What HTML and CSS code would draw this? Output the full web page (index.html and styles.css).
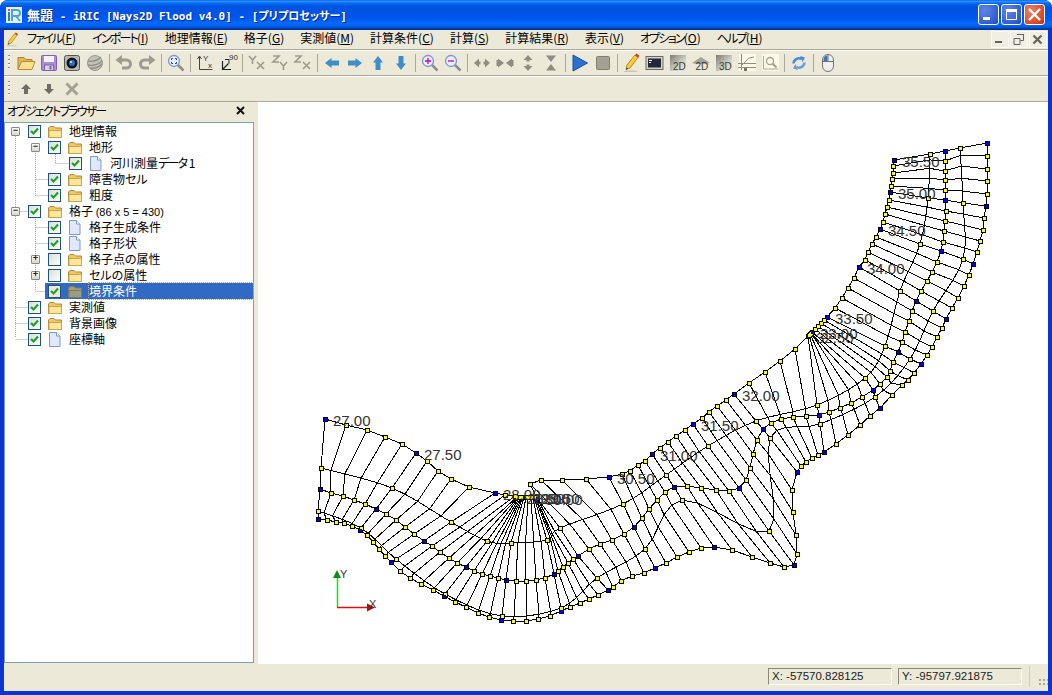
FILE: index.html
```html
<!DOCTYPE html>
<html lang="ja">
<head>
<meta charset="utf-8">
<title>iRIC</title>
<link rel="stylesheet" href="styles.css">
</head>
<body>
<svg class="defs" aria-hidden="true">
  <symbol id="folder" viewBox="0 0 16 15"><path d="M1.500 4 3 2.500h4l1.500 1.500h6v9.500h-13z" fill="#f3c65f" stroke="#a98a3c"/><path d="M2 6.500h12.500v7H2z" fill="#fde79c" stroke="#c9a44e"/></symbol>
  <symbol id="folderdim" viewBox="0 0 16 15"><path d="M1.500 4 3 2.500h4l1.500 1.500h6v9.500h-13z" fill="#a69f70" stroke="#7f7a58"/><path d="M2 6.500h12.500v7H2z" fill="#9c9c86" stroke="#7a7a6a"/></symbol>
  <symbol id="doc" viewBox="0 0 16 15"><path d="M2.500 .5h7l3.500 3.500v10.500H2.500z" fill="#dfe9fb" stroke="#7d98c9"/><path d="M9.500 .5v3.500H13" fill="#fff" stroke="#7d98c9"/></symbol>
  <symbol id="tick" viewBox="0 0 13 13"><path d="M3 6l2.500 2.500L10 3.500" fill="none" stroke="#21a121" stroke-width="2.200"/></symbol>
  <symbol id="i-pencil" viewBox="0 0 20 20"><path d="M2 19h14l-2 -1.500H3z" fill="#c9c6b8"/><path d="M5 12 13 2l3 2.500L8 15l-4 1.500z" fill="#f7c93c" stroke="#b98a1c"/><path d="M13 2l1.500-1.500 3 2.500L16 4.500z" fill="#d8342a"/><path d="M4 16.500l.7-2 1.500 1.200z" fill="#333"/></symbol>
  <symbol id="i-open" viewBox="0 0 20 20"><path d="M2 16V4.500h6l2 2h6V9" fill="#e4b653" stroke="#a9832f"/><path d="M5.500 8.500h13.500l-3 8H2z" fill="#fbe08f" stroke="#b38d33"/></symbol>
  <symbol id="i-save" viewBox="0 0 20 20"><rect x="2.500" y="2.500" width="15" height="15" rx="1" fill="#a78fd2" stroke="#7d63ad"/><rect x="5" y="3" width="10" height="6" fill="#f5f3fa"/><rect x="5.500" y="12" width="9" height="5.500" fill="#d9d2e8" stroke="#7d63ad"/><rect x="10.500" y="13" width="2" height="3.500" fill="#7d63ad"/></symbol>
  <symbol id="i-cam" viewBox="0 0 20 20"><rect x="2.500" y="2.500" width="15" height="15" rx="2" fill="#b8b8b8" stroke="#555"/><circle cx="10" cy="10" r="5.500" fill="#151515"/><circle cx="10" cy="10" r="3" fill="#2b70c4"/><circle cx="9" cy="9" r="1" fill="#d8ecff"/></symbol>
  <symbol id="i-sphere" viewBox="0 0 20 20"><circle cx="10" cy="10" r="7.500" fill="#c4c1b6" stroke="#9a988e"/><path d="M3 8c5 1 10-1 13-4M3 12c6 1 11-1 14-4M5 15c5 1 9-1 12-4" fill="none" stroke="#918f86" stroke-width="1.300"/></symbol>
  <symbol id="i-undo" viewBox="0 0 20 20"><path d="M6 7h6.500a4 4 0 0 1 0 8H8" fill="none" stroke="#9d9b90" stroke-width="3"/><path d="M8 2v10L1.500 7z" fill="#9d9b90"/></symbol>
  <symbol id="i-redo" viewBox="0 0 20 20"><path d="M14 7H7.500a4 4 0 0 0 0 8H12" fill="none" stroke="#9d9b90" stroke-width="3"/><path d="M12 2v10l6.500-5z" fill="#9d9b90"/></symbol>
  <symbol id="i-fit" viewBox="0 0 20 20"><path d="M11.500 11.500l6 6" stroke="#8d8d8d" stroke-width="2.500"/><circle cx="8" cy="8" r="5.500" fill="#e6effc" stroke="#7c95d8" stroke-width="1.300"/><path d="M5.500 7V5.500H7M9 5.500h1.500V7M10.500 9v1.500H9M7 10.500H5.500V9" fill="none" stroke="#2a3fc0"/></symbol>
  <symbol id="i-zin" viewBox="0 0 20 20"><path d="M11.500 11.500l6 6" stroke="#8d8d8d" stroke-width="2.500"/><circle cx="8" cy="8" r="5.500" fill="#e6effc" stroke="#7c95d8" stroke-width="1.300"/><path d="M5 8h6M8 5v6" stroke="#c400c4" stroke-width="1.300"/></symbol>
  <symbol id="i-zout" viewBox="0 0 20 20"><path d="M11.500 11.500l6 6" stroke="#8d8d8d" stroke-width="2.500"/><circle cx="8" cy="8" r="5.500" fill="#e6effc" stroke="#7c95d8" stroke-width="1.300"/><path d="M5 8h6" stroke="#c400c4" stroke-width="1.300"/></symbol>
  <symbol id="i-yx" viewBox="0 0 20 20"><path d="M2 3l3.500 4 3.500-4M5.500 7v4M10 9l7 7M17 9l-7 7" fill="none" stroke="#9d9b90" stroke-width="1.600"/></symbol>
  <symbol id="i-zy" viewBox="0 0 20 20"><path d="M3 3h6L3 9h6M10 9l3.500 4 3.500-4M13.500 13v4" fill="none" stroke="#9d9b90" stroke-width="1.600"/></symbol>
  <symbol id="i-zx" viewBox="0 0 20 20"><path d="M2 3h6L2 9h6M10 9l7 7M17 9l-7 7" fill="none" stroke="#9d9b90" stroke-width="1.600"/></symbol>
  <symbol id="i-left" viewBox="0 0 20 20"><path d="M3 10l6.500-5v2.500h7.500v5H9.500V15z" fill="#3e8fc6"/></symbol>
  <symbol id="i-right" viewBox="0 0 20 20"><path d="M17 10l-6.500-5v2.500H3v5h7.500V15z" fill="#3e8fc6"/></symbol>
  <symbol id="i-up" viewBox="0 0 20 20"><path d="M10 3 5 9.500h2.500V17h5V9.500H15z" fill="#3e8fc6"/></symbol>
  <symbol id="i-down" viewBox="0 0 20 20"><path d="M10 17 5 10.500h2.500V3h5v7.500H15z" fill="#3e8fc6"/></symbol>
  <symbol id="i-ex" viewBox="0 0 20 20"><path d="M2 10l5-4.500v3h1.500v3H7v3zM18 10l-5-4.500v3h-1.500v3H13v3z" fill="#8f8d82"/></symbol>
  <symbol id="i-sh" viewBox="0 0 20 20"><path d="M1.500 7v6h1.500v1.500L9 10 3 5.500V7zM18.500 7v6H17v1.500L11 10l6-4.500V7z" fill="#8f8d82"/></symbol>
  <symbol id="i-ey" viewBox="0 0 20 20"><path d="M10 2l-4.500 5h3v1.500h3V7h3zM10 18l-4.500-5h3v-1.500h3V13h3z" fill="#8f8d82"/></symbol>
  <symbol id="i-sv" viewBox="0 0 20 20"><path d="M5 2.500h10L10 9zM5 17.500h10L10 11z" fill="#8f8d82"/></symbol>
  <symbol id="i-play" viewBox="0 0 20 20"><path d="M3 2l14.500 8L3 18z" fill="#2b6fd2" stroke="#1d4fa3"/></symbol>
  <symbol id="i-stop" viewBox="0 0 20 20"><rect x="3.500" y="3.500" width="13" height="13" rx="1" fill="#a3a094" stroke="#827f73"/></symbol>
  <symbol id="i-con" viewBox="0 0 20 20"><rect x="1" y="3.500" width="17" height="13" fill="#d4d2c8" stroke="#6e6c62"/><rect x="3" y="5.500" width="13" height="9" fill="#20273a"/><path d="M4 7.500h3M4 9.500h2" stroke="#fff"/></symbol>
  <symbol id="i-chart" viewBox="0 0 20 20"><rect x="2" y="1" width="17" height="17" fill="#fbfae8"/><path d="M4.500 1v16M1 14.500h18M1 10.500h18" stroke="#8f8d82" fill="none"/><path d="M4 13 12 5l5-1" fill="none" stroke="#99977f"/><rect x="7" y="15" width="3" height="3" fill="#75736a"/></symbol>
  <symbol id="i-zdoc" viewBox="0 0 20 20"><rect x="2" y="1" width="17" height="17" fill="#fbfae8"/><path d="M3.500 3v13h15" fill="none" stroke="#a9a798"/><circle cx="10" cy="8" r="3.500" fill="none" stroke="#a3a194" stroke-width="1.300"/><path d="M12.500 10.500l4 4" stroke="#a3a194" stroke-width="2"/></symbol>
  <symbol id="i-ref" viewBox="0 0 20 20"><path d="M4.500 10.500a5.500 5.500 0 0 1 8-4.500" fill="none" stroke="#4f86d8" stroke-width="2.500"/><path d="M11 3l5 1.500-2.500 4.500z" fill="#4f86d8"/><path d="M15.500 9.500a5.500 5.500 0 0 1-8 4.500" fill="none" stroke="#6a9ae0" stroke-width="2.500"/><path d="M9 17l-5-1.500L6.500 11z" fill="#6a9ae0"/></symbol>
  <symbol id="i-mouse" viewBox="0 0 20 20"><rect x="4.500" y="1.500" width="11" height="17" rx="5.500" fill="#efefef" stroke="#77756c"/><path d="M10 1.500v7M4.500 8.500h11" stroke="#77756c" fill="none"/><path d="M9.500 2.500v5.500H5.500V6a4 4 0 0 1 4-3.500z" fill="#3e73cc"/></symbol>
  <symbol id="i-up2" viewBox="0 0 20 20"><path d="M10 5 5 10h3v5h4v-5h3z" fill="#6f6d63"/></symbol>
  <symbol id="i-down2" viewBox="0 0 20 20"><path d="M10 15l-5-5h3V5h4v5h3z" fill="#6f6d63"/></symbol>
  <symbol id="i-x2" viewBox="0 0 20 20"><path d="M4.500 4.500l11 11M15.500 4.500l-11 11" stroke="#a3a194" stroke-width="3"/></symbol>
  <linearGradient id="gr" x1="0" y1="0" x2="1" y2="1"><stop offset="0" stop-color="#7e7c72"/><stop offset=".6" stop-color="#d2d0c4"/><stop offset="1" stop-color="#efeee4"/></linearGradient>
</svg>

<div class="window">
  <header class="titlebar">
    <svg class="appicon" viewBox="0 0 16 16"><rect width="16" height="16" fill="#e9f1f8"/><rect x="2" y="2" width="2" height="2" fill="#e24b3a"/><rect x="2" y="5" width="2" height="9" fill="#2a7fc0"/><path d="M6 14V3h5a3 3 0 0 1 0 6H6M10 9l4 5" fill="none" stroke="#4aa6d6" stroke-width="2"/></svg>
    <div class="title"><span class="tj">無題</span> - iRIC [Nays2D Flood v4.0] - [<span class="tk">プリプロセッサー</span>]</div>
    <div class="capbtns">
      <div class="cap"><svg viewBox="0 0 19 19" class="capic"><rect x="4" y="12" width="7" height="3" fill="#fff"/></svg></div>
      <div class="cap"><svg viewBox="0 0 19 19" class="capic"><path d="M4.500 4.500h10v10h-10z" fill="none" stroke="#fff"/><rect x="4" y="4" width="11" height="3" fill="#fff"/></svg></div>
      <div class="cap close"><svg viewBox="0 0 19 19" class="capic"><path d="M4 4l11 11M15 4 4 15" stroke="#fff" stroke-width="2.400"/></svg></div>
    </div>
  </header>

  <nav class="menubar">
    <svg class="menupencil"><use href="#i-pencil"/></svg>
    <div class="menus">
      <span class="mi"><span class="kn">ファイル</span>(<u>F</u>)</span>
      <span class="mi"><span class="kn">インポート</span>(<u>I</u>)</span>
      <span class="mi">地理情報(<u>E</u>)</span>
      <span class="mi">格子(<u>G</u>)</span>
      <span class="mi">実測値(<u>M</u>)</span>
      <span class="mi">計算条件(<u>C</u>)</span>
      <span class="mi">計算(<u>S</u>)</span>
      <span class="mi">計算結果(<u>R</u>)</span>
      <span class="mi">表示(<u>V</u>)</span>
      <span class="mi"><span class="kn">オプション</span>(<u>O</u>)</span>
      <span class="mi"><span class="kn">ヘルプ</span>(<u>H</u>)</span>
    </div>
    <div class="mdibtns">
      <div class="mdi"><svg viewBox="0 0 15 15" class="mdic"><rect x="3" y="9" width="7" height="2" fill="#66645a"/></svg></div>
      <div class="mdi"><svg viewBox="0 0 15 15" class="mdic"><path d="M6.500 2.500h6v6h-3M3 6.500h6v6H3z" fill="none" stroke="#66645a"/><path d="M6 2.500h7M3 6.500h6" stroke="#66645a"/></svg></div>
      <div class="mdi"><svg viewBox="0 0 15 15" class="mdic"><path d="M3.500 3.500l8 8M11.500 3.500l-8 8" stroke="#66645a" stroke-width="2.200"/></svg></div>
    </div>
  </nav>

  <div class="toolbar">
    <i class="grip"></i>
    <div class="tb"><svg class="ic"><use href="#i-open"/></svg></div>
    <div class="tb"><svg class="ic"><use href="#i-save"/></svg></div>
    <div class="tb"><svg class="ic"><use href="#i-cam"/></svg></div>
    <div class="tb"><svg class="ic"><use href="#i-sphere"/></svg></div>
    <i class="sep"></i>
    <div class="tb"><svg class="ic"><use href="#i-undo"/></svg></div>
    <div class="tb"><svg class="ic"><use href="#i-redo"/></svg></div>
    <i class="sep"></i>
    <div class="tb"><svg class="ic"><use href="#i-fit"/></svg></div>
    <i class="sep"></i>
    <div class="tb"><svg class="ic" viewBox="0 0 20 20"><path d="M4.500 4v12.500h13" fill="none" stroke="#444"/><path d="M2.500 6l2-3 2 3" fill="none" stroke="#444"/><text x="8" y="8" class="ict">Y</text><text x="13" y="15" class="ict">x</text></svg></div>
    <div class="tb"><svg class="ic" viewBox="0 0 20 20"><path d="M4.500 8v8.500H13M4.500 16.500l6-6" fill="none" stroke="#222" stroke-width="1.200"/><path d="M7 6.500h4v4" fill="none" stroke="#222"/><text x="11" y="7" class="ict">90</text></svg></div>
    <i class="sep"></i>
    <div class="tb"><svg class="ic"><use href="#i-yx"/></svg></div>
    <div class="tb"><svg class="ic"><use href="#i-zy"/></svg></div>
    <div class="tb"><svg class="ic"><use href="#i-zx"/></svg></div>
    <i class="sep"></i>
    <div class="tb"><svg class="ic"><use href="#i-left"/></svg></div>
    <div class="tb"><svg class="ic"><use href="#i-right"/></svg></div>
    <div class="tb"><svg class="ic"><use href="#i-up"/></svg></div>
    <div class="tb"><svg class="ic"><use href="#i-down"/></svg></div>
    <i class="sep"></i>
    <div class="tb"><svg class="ic"><use href="#i-zin"/></svg></div>
    <div class="tb"><svg class="ic"><use href="#i-zout"/></svg></div>
    <i class="sep"></i>
    <div class="tb"><svg class="ic"><use href="#i-ex"/></svg></div>
    <div class="tb"><svg class="ic"><use href="#i-sh"/></svg></div>
    <div class="tb"><svg class="ic"><use href="#i-ey"/></svg></div>
    <div class="tb"><svg class="ic"><use href="#i-sv"/></svg></div>
    <i class="sep"></i>
    <div class="tb"><svg class="ic"><use href="#i-play"/></svg></div>
    <div class="tb"><svg class="ic"><use href="#i-stop"/></svg></div>
    <i class="sep"></i>
    <div class="tb"><svg class="ic"><use href="#i-pencil"/></svg></div>
    <div class="tb"><svg class="ic"><use href="#i-con"/></svg></div>
    <div class="tb"><svg class="ic" viewBox="0 0 20 20"><rect x="2" y="2" width="16" height="16" fill="url(#gr)"/><text x="5" y="17" class="icd">2D</text></svg></div>
    <div class="tb"><svg class="ic" viewBox="0 0 20 20"><path d="M1 10l9-6 9 6-4 1H5z" fill="#a5a396"/><text x="4.500" y="17" class="icd">2D</text></svg></div>
    <div class="tb"><svg class="ic" viewBox="0 0 20 20"><rect x="2" y="2" width="16" height="16" fill="url(#gr)"/><text x="5" y="17" class="icd">3D</text></svg></div>
    <div class="tb"><svg class="ic"><use href="#i-chart"/></svg></div>
    <div class="tb"><svg class="ic"><use href="#i-zdoc"/></svg></div>
    <i class="sep"></i>
    <div class="tb"><svg class="ic"><use href="#i-ref"/></svg></div>
    <i class="sep"></i>
    <div class="tb"><svg class="ic"><use href="#i-mouse"/></svg></div>
  </div>

  <div class="toolbar">
    <i class="grip"></i>
    <div class="tb"><svg class="ic"><use href="#i-up2"/></svg></div>
    <div class="tb"><svg class="ic"><use href="#i-down2"/></svg></div>
    <div class="tb"><svg class="ic"><use href="#i-x2"/></svg></div>
  </div>

  <main class="workspace">
    <aside class="panel">
      <div class="panelhead"><span class="kn">オブジェクトブラウザー</span><svg class="panelx" viewBox="0 0 9 9"><path d="M1 1l7 7M8 1 1 8" stroke="#111" stroke-width="2"/></svg></div>
      <div class="tree">
        <svg class="guides" aria-hidden="true">
          <path d="M10.500 13v202M10.500 88.500h13M10.500 184.500h13M10.500 200.500h13M10.500 216.500h13M30.500 28v45M30.500 56.500h13M30.500 72.500h13M50.500 31v9M50.500 40.500h13M30.500 92v76M30.500 104.500h13M30.500 120.500h13M30.500 168.500h13" fill="none" stroke="#a6a598" stroke-dasharray="1 1"/>
        </svg>
        <div class="row d0"><span class="exp">−</span><div class="body"><span class="ck"><svg class="tick"><use href="#tick"/></svg></span><svg class="ti"><use href="#folder"/></svg><span class="lb">地理情報</span></div></div>
        <div class="row d1"><span class="exp">−</span><div class="body"><span class="ck"><svg class="tick"><use href="#tick"/></svg></span><svg class="ti"><use href="#folder"/></svg><span class="lb">地形</span></div></div>
        <div class="row d2"><span class="noexp"></span><div class="body"><span class="ck"><svg class="tick"><use href="#tick"/></svg></span><svg class="ti"><use href="#doc"/></svg><span class="lb">河川測量<span class="kn">データ</span> 1</span></div></div>
        <div class="row d1"><span class="noexp"></span><div class="body"><span class="ck"><svg class="tick"><use href="#tick"/></svg></span><svg class="ti"><use href="#folder"/></svg><span class="lb">障害物セル</span></div></div>
        <div class="row d1"><span class="noexp"></span><div class="body"><span class="ck"><svg class="tick"><use href="#tick"/></svg></span><svg class="ti"><use href="#folder"/></svg><span class="lb">粗度</span></div></div>
        <div class="row d0"><span class="exp">−</span><div class="body"><span class="ck"><svg class="tick"><use href="#tick"/></svg></span><svg class="ti"><use href="#folder"/></svg><span class="lb">格子 <small>(86 x 5 = 430)</small></span></div></div>
        <div class="row d1"><span class="noexp"></span><div class="body"><span class="ck"><svg class="tick"><use href="#tick"/></svg></span><svg class="ti"><use href="#doc"/></svg><span class="lb">格子生成条件</span></div></div>
        <div class="row d1"><span class="noexp"></span><div class="body"><span class="ck"><svg class="tick"><use href="#tick"/></svg></span><svg class="ti"><use href="#doc"/></svg><span class="lb">格子形状</span></div></div>
        <div class="row d1"><span class="exp">+</span><div class="body"><span class="ck"></span><svg class="ti"><use href="#folder"/></svg><span class="lb">格子点の属性</span></div></div>
        <div class="row d1"><span class="exp">+</span><div class="body"><span class="ck"></span><svg class="ti"><use href="#folder"/></svg><span class="lb">セルの属性</span></div></div>
        <div class="row d1 sel"><span class="noexp"></span><div class="body"><span class="ck"><svg class="tick"><use href="#tick"/></svg></span><svg class="ti"><use href="#folderdim"/></svg><span class="lb">境界条件</span></div></div>
        <div class="row d0"><span class="noexp"></span><div class="body"><span class="ck"><svg class="tick"><use href="#tick"/></svg></span><svg class="ti"><use href="#folder"/></svg><span class="lb">実測値</span></div></div>
        <div class="row d0"><span class="noexp"></span><div class="body"><span class="ck"><svg class="tick"><use href="#tick"/></svg></span><svg class="ti"><use href="#folder"/></svg><span class="lb">背景画像</span></div></div>
        <div class="row d0"><span class="noexp"></span><div class="body"><span class="ck"><svg class="tick"><use href="#tick"/></svg></span><svg class="ti"><use href="#doc"/></svg><span class="lb">座標軸</span></div></div>
      </div>
    </aside>
    <section class="canvas">
      <svg id="mesh" class="mesh" viewBox="258 102 790 562" xmlns="http://www.w3.org/2000/svg">
        <g id="grid"></g>
        <g id="axes">
          <path d="M337.500 607.500V575" stroke="#00f000" stroke-width="1.500" fill="none"/>
          <path d="M337 570l-4 8h8z" fill="#0a8f14"/>
          <path d="M337 607.500h33" stroke="#e01010" stroke-width="1.500" fill="none"/>
          <path d="M375 607.500l-8-4v8z" fill="#a80f14"/>
          <text x="340" y="578" class="axl">Y</text>
          <text x="369" y="608" class="axl">X</text>
        </g>
      </svg>
    </section>
  </main>

  <footer class="statusbar">
    <div class="field">X: -57570.828125</div>
    <div class="field">Y: -95797.921875</div>
    <div class="resize"></div>
  </footer>
</div>
<script src="mesh.js"></script>
</body>
</html>
```
FILE: styles.css
```css
* { box-sizing: border-box; }
html, body { margin: 0; padding: 0; background: #fff; overflow: hidden; }
body { width: 1052px; height: 695px; font-family: "Noto Sans CJK JP", sans-serif; font-size: 12px; color: #000; }
.defs { position: absolute; width: 0; height: 0; overflow: hidden; }
.ict { font: 8px "Liberation Sans", sans-serif; fill: #333; }
.icd { font: 10px "Liberation Sans", sans-serif; fill: #3a3a34; }
.kn { letter-spacing: -1.800px; }

.window { width: 1052px; height: 695px; display: flex; flex-direction: column; padding: 0 4px 4px; border-radius: 8px 8px 0 0; background: #0a35d0; }

.titlebar { flex: 0 0 30px; margin: 0 -4px; display: flex; align-items: center; padding: 0 7px 0 6px; border-radius: 8px 8px 0 0;
  background: linear-gradient(#0058ee 0%, #3593ff 4%, #288eff 6%, #127dff 8%, #036ffc 10%, #0262ee 14%, #0057e5 20%, #0054e1 24%, #0055eb 56%, #005bf5 66%, #026afe 76%, #0062ef 86%, #0052d6 92%, #0040ab 94%, #003092 100%); }
.appicon { width: 16px; height: 16px; margin-right: 5px; margin-top: -1px; flex: none; }
.title { flex: 1; color: #fff; font: bold 11px "DejaVu Sans Mono", monospace; text-shadow: 1px 1px 0 #0a2a90; white-space: pre; margin-top: -2px; }
.tj { font: bold 13px "Noto Sans CJK JP", sans-serif; }
.tk { font: bold 11px "Noto Sans CJK JP", sans-serif; font-feature-settings: "palt"; }
.capbtns { display: flex; gap: 2px; margin-top: -2px; }
.cap { width: 21px; height: 21px; border: 1px solid #fff; border-radius: 3px; background: radial-gradient(circle at 30% 30%, #5f86e8, #2c58d0 80%, #1f43b5); }
.cap.close { background: radial-gradient(circle at 30% 30%, #e9836a, #d9451f 75%, #b52e10); }
.capic { display: block; width: 19px; height: 19px; }

.menubar { flex: 0 0 20px; display: flex; align-items: center; background: #ece9d8; border-bottom: 1px solid #aca899; }
.menupencil { width: 15px; height: 15px; margin-left: 1px; flex: none; }
.menus { flex: 1; display: flex; padding-bottom: 3px; margin-left: -1px; }
.mi { padding: 0 8px; line-height: 16px; font-feature-settings: "palt"; white-space: nowrap; }
.mdibtns { display: flex; gap: 1px; padding-right: 1px; }
.mdi { width: 18px; height: 17px; background: #f1efe4; border: 1px solid #fbfaf5; }
.mdic { display: block; width: 15px; height: 15px; }

.toolbar { flex: 0 0 26px; display: flex; align-items: center; background: #ece9d8; border-top: 1px solid #fff; border-bottom: 1px solid #aca899; padding-left: 4px; }
.grip { flex: none; width: 2px; height: 16px; margin-right: 4px; background: repeating-linear-gradient(#8e8c80 0 1px, #fff 1px 2px, transparent 2px 4px); }
.tb { flex: none; width: 23px; height: 24px; display: flex; align-items: center; justify-content: center; }
.ic { display: block; width: 20px; height: 20px; }
.sep { flex: none; width: 6px; height: 18px; background: linear-gradient(#aca899, #aca899) center / 1px 100% no-repeat; }

.workspace { flex: 1; display: flex; min-height: 0; }
.panel { flex: 0 0 254px; display: flex; flex-direction: column; background: #ece9d8; padding-bottom: 1px; }
.panelhead { flex: 0 0 20px; display: flex; align-items: center; justify-content: space-between; padding: 0 9px 3px 3px; font-feature-settings: "palt"; margin-right: 4px; }
.panelx { width: 9px; height: 9px; }
.tree { position: relative; flex: 1; width: 250px; background: #fff; border: 1px solid #7f9db9; }
.guides { position: absolute; left: 0; top: 0; width: 100%; height: 100%; }
.row { position: relative; display: flex; align-items: center; height: 16px; }
.d0 { padding-left: 6px; }
.d1 { padding-left: 26px; }
.d2 { padding-left: 47px; }
.exp { flex: none; width: 9px; height: 9px; margin-right: 6px; border: 1px solid #7f8b9a; border-radius: 1px; background: linear-gradient(#fff, #d8d6c8); font: bold 9px/6px "Liberation Mono", monospace; text-align: center; color: #222; }
.noexp { flex: none; width: 15px; }
.body { flex: 1; display: flex; align-items: center; height: 16px; padding-left: 2px; min-width: 0; }
.ck { flex: none; width: 13px; height: 13px; border: 1px solid #1c5180; background: linear-gradient(135deg, #dcdcd7, #fff); position: relative; }
.tick { position: absolute; left: -1px; top: -1px; width: 13px; height: 13px; }
.ti { flex: none; width: 16px; height: 15px; margin-left: 6px; margin-right: 6px; }
.lb { white-space: nowrap; line-height: 15px; font-feature-settings: "palt"; margin-top: -1px; }
.lb small { font: 11px "Liberation Sans", sans-serif; }
.sel .body { margin-left: -1px; padding-left: 3px; background: #316ac5; }
.sel .ck { background: #ece9d8; }
.sel .lb { color: #fff; outline: 1px dotted #e8a040; flex: 1; margin-top: 0; height: 16px; }

.canvas { flex: 1; background: #fff; min-width: 0; }
.mesh { display: block; width: 790px; height: 562px; }
.mesh-line { fill: none; stroke: #000; stroke-width: 1; shape-rendering: crispEdges; }
.node { shape-rendering: crispEdges; }
.node.k { fill: #000; }
.node.y { fill: #ff0; }
.node.b { fill: #0000f0; }
.lab { font: 15px "Liberation Sans", sans-serif; fill: #333; }
.axl { font: 11px "Liberation Sans", sans-serif; fill: #333; }

.statusbar { flex: 0 0 27px; display: flex; align-items: center; justify-content: flex-end; gap: 6px; background: #ece9d8; padding-bottom: 3px; }
.field { width: 124px; height: 17px; border: 1px solid; border-color: #8a887c #fff #fff #8a887c; padding-left: 3px; font: 11.500px/15px "Liberation Sans", sans-serif; color: #222; }
.resize { width: 19px; height: 21px; margin-left: 1px; border-left: 1px solid #d0cdbc; background: radial-gradient(circle, #aca899 50%, transparent 55%) 0 0 / 4px 4px; background-clip: content-box; padding: 11px 0 0 8px; }
```
FILE: mesh.js
```js
// Computational grid of the river: 86 x 5 nodes; rows 0, 2 and 4 are listed,
// rows 1 and 3 are splined through their control points (one every 5 nodes).
var row0 = [[325,419],[346,425],[367,430],[385,437],[402,444],[416,453],[427,461],[438,471],[451,479],[469,487],
[495,493],[505,495],[515,496],[517,497],[518,497],[519,497],[520,497],[521,497],[522,497],[523,497],
[524,497],[526,497],[528,497],[531,497],[533,497],[534,497],[535,497],[536,497],[536,498],[537,498],
[537,498],[530,484],[541,480],[562,480],[586,479],[609,477],[622,474],[630,471],[638,465],[645,461],
[652,454],[660,448],[668,442],[676,436],[685,430],[693,424],[702,418],[709,412],[717,406],[726,400],
[734,394],[749,383],[765,372],[780,361],[795,349],[808,336],[809,335],[810,334],[811,333],[811,333],
[812,332],[815,329],[818,326],[821,323],[824,320],[827,317],[835,308],[842,298],[848,288],[854,278],
[859,267],[865,260],[868,252],[872,244],[876,237],[880,229],[883,222],[885,214],[887,207],[889,200],
[890,192],[891,186],[892,179],[893,173],[893,166],[894,160]];
var row2 = [[320,489],[331,493],[343,496],[354,500],[365,504],[376,509],[386,514],[396,520],[405,527],[414,534],
[424,541],[432,546],[440,552],[449,558],[457,563],[466,567],[474,571],[482,574],[490,576],[498,578],
[506,580],[516,581],[526,581],[536,580],[545,578],[554,574],[558,571],[563,567],[568,563],[573,559],
[578,556],[589,549],[600,544],[612,540],[624,534],[634,527],[642,518],[649,509],[657,500],[665,492],
[674,487],[687,486],[701,488],[716,490],[729,491],[739,488],[746,480],[750,468],[753,454],[757,440],
[763,429],[771,423],[781,419],[793,417],[806,416],[819,415],[829,412],[840,408],[851,403],[862,397],
[873,390],[880,384],[887,377],[890,371],[893,362],[898,352],[902,342],[905,332],[909,321],[912,311],
[916,301],[921,291],[927,281],[932,272],[937,262],[941,251],[943,242],[944,231],[945,221],[946,211],
[945,200],[945,190],[945,180],[945,171],[945,161],[945,151]];
var row4 = [[318,519],[327,520],[336,522],[344,523],[352,526],[360,530],[367,535],[373,542],[379,549],[385,556],
[391,562],[400,571],[410,578],[421,584],[433,590],[444,596],[455,602],[466,607],[478,613],[489,617],
[501,620],[513,621],[526,621],[538,619],[550,616],[561,611],[570,607],[580,603],[589,599],[598,595],
[608,590],[613,587],[621,581],[632,576],[644,573],[655,568],[666,563],[677,557],[689,552],[701,548],
[714,547],[732,550],[752,557],[770,563],[784,567],[794,565],[797,554],[796,535],[793,512],[792,490],
[797,472],[801,466],[806,462],[812,458],[818,455],[824,452],[836,444],[848,435],[860,425],[870,416],
[880,408],[892,395],[902,385],[908,380],[914,373],[921,364],[927,355],[932,347],[937,337],[942,328],
[946,319],[952,308],[958,298],[964,286],[969,275],[973,264],[977,252],[980,241],[983,230],[984,218],
[986,206],[987,194],[987,181],[987,169],[987,156],[987,143]];
var keys1 = [[321,468],[392,488],[451,522],[487,541],[511,543],[547,540],[560,528],[623,504],[666,475],
[708,446],[756,421],[817,405],[865,378],[885,346],[900,291],[920,244],[928,198],[930,154]];
var keys3 = [[318,511],[361,528],[396,559],[445,594],[502,616],[561,608],[597,578],[645,549],[682,500],
[769,531],[770,438],[820,424],[875,397],[910,359],[933,311],[963,259],[963,203],[960,148]];

function spline(keys) {
  var out = [];
  for (var i = 0; i <= 85; i++) {
    var s = Math.min(Math.floor(i / 5), keys.length - 2), t = i / 5 - s;
    var p0 = keys[Math.max(s - 1, 0)], p1 = keys[s], p2 = keys[s + 1], p3 = keys[Math.min(s + 2, keys.length - 1)];
    var pt = [0, 1].map(function (k) {
      return 0.5 * (2 * p1[k] + (p2[k] - p0[k]) * t + (2 * p0[k] - 5 * p1[k] + 4 * p2[k] - p3[k]) * t * t + (3 * p1[k] - p0[k] - 3 * p2[k] + p3[k]) * t * t * t);
    });
    out.push(pt);
  }
  return out;
}

var rows = [row0, spline(keys1), row2, spline(keys3), row4];
var NS = 'http://www.w3.org/2000/svg';
var grid = document.getElementById('grid');

function el(name, attrs, text) {
  var e = document.createElementNS(NS, name);
  for (var a in attrs) e.setAttribute(a, attrs[a]);
  if (text) e.textContent = text;
  grid.appendChild(e);
}
function pts(list) {
  return list.map(function (p) { return p[0] + ',' + p[1]; }).join(' ');
}
function isNode(i, j) {
  return !((j === 1 || j === 3) && i % 5 !== 0);
}

rows.forEach(function (r) { el('polyline', { points: pts(r), 'class': 'mesh-line' }); });
for (var i = 0; i <= 85; i++) {
  el('polyline', { points: pts(rows.map(function (r) { return r[i]; })), 'class': 'mesh-line' });
}
// Outlines first, fills over them, so that bunched nodes merge into one yellow blob.
rows.forEach(function (r, j) {
  r.forEach(function (p, i) {
    if (isNode(i, j)) el('rect', { x: Math.round(p[0]) - 2, y: Math.round(p[1]) - 2, width: 5, height: 5, 'class': 'node k' });
  });
});
rows.forEach(function (r, j) {
  r.forEach(function (p, i) {
    if (!isNode(i, j)) return;
    var blue = i % 5 === 0 && j % 2 === 0;
    el('rect', { x: Math.round(p[0]) - 1, y: Math.round(p[1]) - 1, width: 3, height: 3, 'class': 'node ' + (blue ? 'b' : 'y') });
  });
});
for (var n = 0; n <= 17; n++) {
  var q = row0[n * 5];
  el('text', { x: q[0] + 8, y: q[1] + 7, 'class': 'lab' }, (27 + n * 0.5).toFixed(2));
}
```
